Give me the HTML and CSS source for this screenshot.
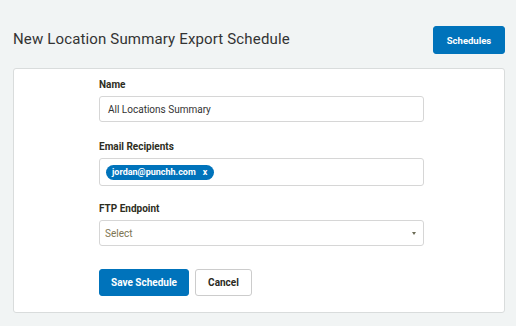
FILE: index.html
```html
<!DOCTYPE html>
<html lang="en">
<head>
    <meta charset="UTF-8">
    <title>New Location Summary Export Schedule</title>
    <link rel="stylesheet" href="styles.css">
</head>
<body>
    <header class="page-head">
        <h1>New Location Summary Export Schedule</h1>
        <button class="btn btn-primary btn-top">Schedules</button>
    </header>

    <section class="card">
        <form class="form">
            <div class="field">
                <label>Name</label>
                <div class="input">All Locations Summary</div>
            </div>
            <div class="field">
                <label>Email Recipients</label>
                <div class="input input-tags">
                    <span class="tag">jordan@punchh.com<span class="tag-x">x</span></span>
                </div>
            </div>
            <div class="field">
                <label>FTP Endpoint</label>
                <div class="input input-select">
                    <span class="placeholder">Select</span>
                    <span class="caret"></span>
                </div>
            </div>
            <div class="actions">
                <button type="button" class="btn btn-primary">Save Schedule</button>
                <button type="button" class="btn btn-default">Cancel</button>
            </div>
        </form>
    </section>
</body>
</html>
```

FILE: styles.css
```css
body {
    background-color: #f1f4f4;
    color: #333333;
    font-family: Roboto, "Liberation Sans", sans-serif;
    margin: 0;
    padding: 26px 11px 0 13px;
}
.page-head {
    display: flex;
    justify-content: space-between;
    align-items: flex-start;
    height: 42px;
}
.page-head h1 {
    font-size: 15px;
    line-height: 18px;
    font-weight: 400;
    letter-spacing: 0.15px;
    color: #333333;
    margin: 4px 0 0 0;
}
.btn {
    font-family: Roboto, "Liberation Sans", sans-serif;
    font-size: 10px;
    font-weight: 700;
    border-radius: 3px;
    height: 27px;
    padding: 0;
    cursor: pointer;
}
.btn-primary {
    background-color: #0073bb;
    border: 1px solid #0073bb;
    color: #ffffff;
}
.btn-default {
    background-color: #ffffff;
    border: 1px solid #cccccc;
    color: #2a2a1e;
}
.btn-top {
    width: 72px;
    height: 28px;
    font-size: 9.5px;
}
.card {
    background-color: #ffffff;
    border: 1px solid #d9dcdc;
    border-radius: 3px;
    height: 245px;
    box-sizing: border-box;
    padding: 10px 0 0 85px;
}
.form {
    width: 325px;
}
.field {
    height: 62px;
}
.field label {
    display: block;
    font-size: 10px;
    font-weight: 700;
    color: #2d2d22;
    height: 12px;
    line-height: 12px;
    margin-bottom: 5px;
}
.input {
    box-sizing: border-box;
    height: 26px;
    border: 1px solid #d6d6d6;
    border-radius: 3px;
    display: flex;
    align-items: center;
    padding: 0 8px;
    font-size: 10px;
    color: #333333;
}
.input-tags {
    height: 28px;
    padding: 0 6px;
}
.tag {
    background-color: #0073bb;
    color: #ffffff;
    font-weight: 700;
    font-size: 9px;
    border-radius: 8px;
    height: 15px;
    line-height: 15px;
    padding: 0 7px 0 6px;
}
.tag-x {
    margin-left: 7px;
}
.input-select {
    justify-content: space-between;
    padding: 0 7px 0 5px;
}
.placeholder {
    color: #7d7552;
}
.caret {
    width: 0;
    height: 0;
    border-left: 2.5px solid transparent;
    border-right: 2.5px solid transparent;
    border-top: 3px solid #6b6b55;
}
.actions {
    display: flex;
    gap: 6px;
    margin-top: 4px;
}
.actions .btn-primary {
    width: 90px;
}
.actions .btn-default {
    width: 57px;
}
```
